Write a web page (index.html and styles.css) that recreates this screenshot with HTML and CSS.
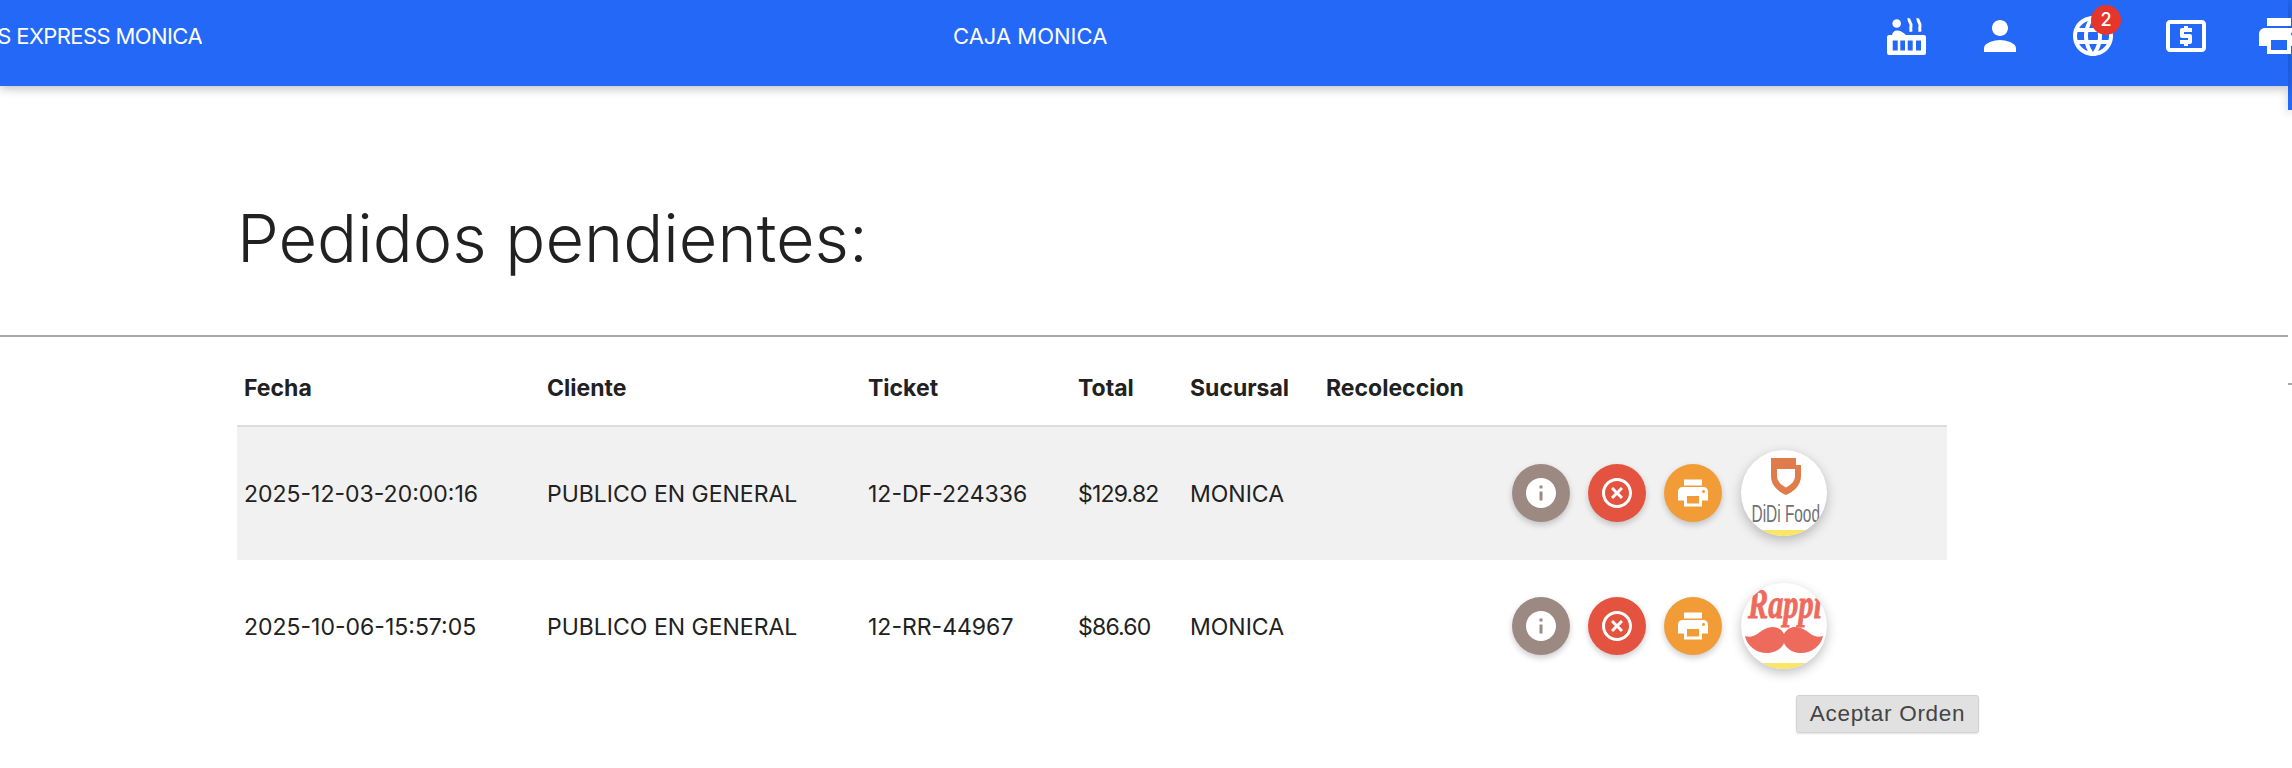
FILE: index.html
```html
<!DOCTYPE html>
<html lang="es">
<head>
<meta charset="utf-8">
<title>Pedidos pendientes</title>
<link rel="stylesheet" href="styles.css">
</head>
<body>
<div class="page">
  <div class="main">
    <header class="topbar">
      <div class="brand"><span class="brand-text">S EXPRESS MONICA</span></div>
      <div class="caja">CAJA MONICA</div>
      <nav class="tools">
        <span class="tool">
          <svg class="ico48" viewBox="0 0 48 48"><circle cx="13.700" cy="11.500" r="4.300" fill="#fff"/><path fill="#fff" fill-rule="evenodd" d="M6 23h3c.5-3 2.500-4.500 5-4.500 3 0 6.500 2 9 4.500h18a2 2 0 0 1 2 2v16a2 2 0 0 1-2 2H6a2 2 0 0 1-2-2V25a2 2 0 0 1 2-2zm3.700 5.500v10h5v-10zm7.600 0v10h4.700v-10zm7.400 0v10h5v-10zm8.300 0v10h5v-10z"/><path fill="none" stroke="#fff" stroke-width="3" d="M26 6.300c-1 3 3 4.700 2 8-.4 1.300-.4 3 0 5.400M35 6.300c-1 3 3 4.700 2 8-.4 1.300-.4 3 0 5.400"/></svg>
        </span>
        <span class="tool">
          <svg class="ico48" viewBox="0 0 24 24"><path d="M12 12c2.210 0 4-1.790 4-4s-1.790-4-4-4-4 1.790-4 4 1.790 4 4 4zm0 2c-2.670 0-8 1.340-8 4v2h16v-2c0-2.660-5.330-4-8-4z"/></svg>
        </span>
        <span class="tool">
          <svg class="ico48" viewBox="0 0 24 24"><path d="M11.990 2C6.470 2 2 6.480 2 12s4.470 10 9.990 10C17.520 22 22 17.520 22 12S17.520 2 11.990 2zm6.930 6h-2.950c-.32-1.250-.78-2.450-1.380-3.560 1.840.63 3.370 1.910 4.330 3.560zM12 4.040c.83 1.200 1.480 2.530 1.910 3.960h-3.820c.43-1.430 1.080-2.760 1.910-3.960zM4.260 14C4.100 13.360 4 12.690 4 12s.1-1.360.26-2h3.380c-.08.66-.14 1.320-.14 2 0 .68.06 1.340.14 2H4.260zm.82 2h2.950c.32 1.250.78 2.450 1.380 3.560-1.840-.63-3.370-1.900-4.330-3.560zm2.950-8H5.080c.96-1.660 2.490-2.930 4.330-3.560C8.810 5.550 8.350 6.750 8.030 8zM12 19.960c-.83-1.200-1.480-2.530-1.910-3.960h3.820c-.43 1.430-1.080 2.760-1.910 3.960zM14.340 14H9.660c-.09-.66-.16-1.320-.16-2 0-.68.07-1.350.16-2h4.680c.09.65.16 1.320.16 2 0 .68-.07 1.340-.16 2zm.25 5.560c.6-1.110 1.060-2.310 1.380-3.560h2.950c-.96 1.650-2.490 2.930-4.330 3.560zM16.360 14c.08-.66.14-1.320.14-2 0-.68-.06-1.340-.14-2h3.380c.16.64.26 1.310.26 2s-.1 1.360-.26 2h-3.380z"/></svg>
          <span class="badge">2</span>
        </span>
        <span class="tool">
          <svg class="ico48" viewBox="0 0 24 24"><path d="M11 17h2v-1h1c.55 0 1-.45 1-1v-3c0-.55-.45-1-1-1h-3v-1h4V8h-2V7h-2v1h-1c-.55 0-1 .45-1 1v3c0 .55.45 1 1 1h3v1H9v2h2v1zm9-13H4c-1.110 0-1.990.89-1.990 2L2 18c0 1.110.89 2 2 2h16c1.110 0 2-.89 2-2V6c0-1.110-.89-2-2-2zm0 14H4V6h16v12z"/></svg>
        </span>
        <span class="tool">
          <svg class="ico48" viewBox="0 0 24 24"><path d="M19 8H5c-1.660 0-3 1.340-3 3v6h4v4h12v-4h4v-6c0-1.660-1.340-3-3-3zm-3 11H8v-5h8v5zm3-7c-.55 0-1-.45-1-1s.45-1 1-1 1 .45 1 1-.45 1-1 1zm-1-9H6v4h12V3z"/></svg>
        </span>
      </nav>
    </header>

    <h1 class="title">Pedidos pendientes:</h1>
    <hr class="rule">

    <div class="wrap">
      <table class="orders">
        <colgroup>
          <col class="c-fecha"><col class="c-cliente"><col class="c-ticket"><col class="c-total"><col class="c-suc"><col class="c-rec"><col class="c-act">
        </colgroup>
        <thead>
          <tr><th>Fecha</th><th>Cliente</th><th>Ticket</th><th>Total</th><th>Sucursal</th><th>Recoleccion</th><th></th></tr>
        </thead>
        <tbody>
          <tr class="shaded">
            <td>2025-12-03-20:00:16</td><td>PUBLICO EN GENERAL</td><td>12-DF-224336</td><td class="money">$129.82</td><td>MONICA</td><td></td>
            <td>
              <div class="actions">
                <span class="btn info"><svg class="ico36" viewBox="0 0 24 24"><path d="M12 2C6.480 2 2 6.480 2 12s4.480 10 10 10 10-4.480 10-10S17.520 2 12 2zm1 15h-2v-6h2v6zm0-8h-2V7h2v2z"/></svg></span>
                <span class="btn cancel"><svg class="ico36" viewBox="0 0 24 24"><path d="M14.590 8L12 10.590 9.410 8 8 9.410 10.590 12 8 14.590 9.410 16 12 13.410 14.590 16 16 14.590 13.410 12 16 9.410 14.590 8zM12 2C6.470 2 2 6.470 2 12s4.470 10 10 10 10-4.470 10-10S17.530 2 12 2zm0 18c-4.410 0-8-3.590-8-8s3.590-8 8-8 8 3.590 8 8-3.590 8-8 8z"/></svg></span>
                <span class="btn printer"><svg class="ico36" viewBox="0 0 24 24"><path d="M19 8H5c-1.660 0-3 1.340-3 3v6h4v4h12v-4h4v-6c0-1.660-1.340-3-3-3zm-3 11H8v-5h8v5zm3-7c-.55 0-1-.45-1-1s.45-1 1-1 1 .45 1 1-.45 1-1 1zm-1-9H6v4h12V3z"/></svg></span>
                <span class="logo">
                  <svg class="logo-svg" viewBox="0 0 86 86">
                    <rect x="0" y="80" width="86" height="6" fill="#fbe566"/>
                    <path fill="#e07c4c" fill-rule="evenodd" d="M30 8h25v7h5v11c0 10-8 16-15 19-7-3-15-9-15-19zm6 11v7c0 5 4 9 9 11.500 5-2.500 9-6.500 9-11.500v-7z"/>
                    <text x="10.500" y="72" class="didi" textLength="68.500" lengthAdjust="spacingAndGlyphs">DiDi Food</text>
                  </svg>
                </span>
              </div>
            </td>
          </tr>
          <tr>
            <td>2025-10-06-15:57:05</td><td>PUBLICO EN GENERAL</td><td>12-RR-44967</td><td class="money">$86.60</td><td>MONICA</td><td></td>
            <td>
              <div class="actions">
                <span class="btn info"><svg class="ico36" viewBox="0 0 24 24"><path d="M12 2C6.480 2 2 6.480 2 12s4.480 10 10 10 10-4.480 10-10S17.520 2 12 2zm1 15h-2v-6h2v6zm0-8h-2V7h2v2z"/></svg></span>
                <span class="btn cancel"><svg class="ico36" viewBox="0 0 24 24"><path d="M14.590 8L12 10.590 9.410 8 8 9.410 10.590 12 8 14.590 9.410 16 12 13.410 14.590 16 16 14.590 13.410 12 16 9.410 14.590 8zM12 2C6.470 2 2 6.470 2 12s4.470 10 10 10 10-4.470 10-10S17.530 2 12 2zm0 18c-4.410 0-8-3.590-8-8s3.590-8 8-8 8 3.590 8 8-3.590 8-8 8z"/></svg></span>
                <span class="btn printer"><svg class="ico36" viewBox="0 0 24 24"><path d="M19 8H5c-1.660 0-3 1.340-3 3v6h4v4h12v-4h4v-6c0-1.660-1.340-3-3-3zm-3 11H8v-5h8v5zm3-7c-.55 0-1-.45-1-1s.45-1 1-1 1 .45 1 1-.45 1-1 1zm-1-9H6v4h12V3z"/></svg></span>
                <span class="logo">
                  <svg class="logo-svg" viewBox="0 0 86 86">
                    <rect x="0" y="80" width="86" height="6" fill="#fbe566"/>
                    <text x="7" y="35" class="rappi" textLength="74" lengthAdjust="spacingAndGlyphs">Rappi</text>
                    <path fill="#ee6a5c" d="M4 53C12 56 17 50 22 47 30 42 39 43 43 51 47 43 56 42 64 47 69 50 74 56 82 53 80 63 70 71 58 70 50 69 45 65 43 60 41 65 36 69 28 70 16 71 6 63 4 53Z"/>
                  </svg>
                </span>
              </div>
            </td>
          </tr>
        </tbody>
      </table>
    </div>
    <div class="tooltip">Aceptar Orden</div>
  </div>
  <aside class="strip">
    <div class="strip-bar"></div>
    <div class="strip-line"></div>
  </aside>
</div>
</body>
</html>
```
FILE: styles.css
```css
* { box-sizing: border-box; }
html, body { margin: 0; padding: 0; background: #fff; }
body { font-family: "Inter", "Liberation Sans", sans-serif; color: #212121; overflow: hidden; }
.page { display: flex; width: 2292px; height: 768px; overflow: hidden; }
.main { position: relative; width: 2288px; flex: none; }

.topbar {
  display: flex; align-items: flex-start; height: 86px; background: #2468f7; color: #fff;
  box-shadow: 0 2px 10px rgba(0,0,0,.28); position: relative;
}
.brand { width: 202px; flex: none; display: flex; justify-content: flex-end; overflow: hidden; white-space: nowrap; font-size: 22px; line-height: 72px; letter-spacing: -.6px; }
.brand-text { flex: none; }
.caja { margin-left: 751px; font-size: 22px; line-height: 72px; white-space: nowrap; }
.tools { display: flex; margin-left: auto; margin-right: -37px; padding-top: 12px; overflow: visible; }
.tool { position: relative; display: flex; justify-content: center; width: 93px; }
.ico48 { width: 48px; height: 48px; fill: #fff; display: block; }
.badge {
  position: absolute; left: 45px; top: -7px; width: 30px; height: 30px; border-radius: 50%;
  background: #e6352b; color: #fff; font-size: 18px; font-weight: 500; line-height: 30px; text-align: center;
}

.title { margin: 0; padding: 112px 0 0 237px; font-size: 66.600px; font-weight: 350; line-height: 80px; color: #212121; }
.rule { margin: 57px 0 0; border: 0; border-top: 2px solid #aaa; }

.wrap { padding: 0 341px 0 237px; }
.orders { width: 100%; table-layout: fixed; border-collapse: collapse; font-size: 23px; }
.c-fecha { width: 303px; } .c-cliente { width: 321px; } .c-ticket { width: 210px; }
.c-total { width: 112px; } .c-suc { width: 136px; } .c-rec { width: 186px; }
.orders th { height: 89px; padding: 14px 7px 0; text-align: left; font-weight: 700; border-bottom: 2px solid #ddd; white-space: nowrap; }
.orders td { height: 134px; padding: 0 7px; white-space: nowrap; font-weight: 400; }
.orders .money { letter-spacing: -.8px; }
.shaded { background: #f1f1f1; }

.actions { display: flex; align-items: center; gap: 18px; padding-bottom: 2px; }
.btn { width: 58px; height: 58px; border-radius: 50%; display: flex; align-items: center; justify-content: center; box-shadow: 0 3px 6px rgba(0,0,0,.2); flex: none; }
.info { background: #9c8a82; }
.cancel { background: #e45240; }
.printer { background: #f29c38; }
.ico36 { width: 36px; height: 36px; fill: #fff; display: block; }
.logo { width: 86px; height: 86px; border-radius: 50%; overflow: hidden; background: #fff; box-shadow: 0 4px 12px rgba(0,0,0,.25); flex: none; margin-left: 1px; }
.logo-svg { display: block; width: 86px; height: 86px; }
.didi { font-family: "Liberation Sans", sans-serif; font-size: 23.500px; fill: #6f6f75; }
.rappi { font-family: "Liberation Serif", serif; font-style: italic; font-weight: 700; font-size: 42px; fill: #ee6a5c; stroke: #ee6a5c; stroke-width: .8px; }

.tooltip {
  position: absolute; left: 1796px; top: 695px; width: 183px; height: 38px;
  background: #e1e1e1; border: 1px solid #d2d2d2; border-radius: 3px; box-shadow: 0 1px 2px rgba(0,0,0,.12);
  font-family: "Liberation Sans", sans-serif; font-size: 22.500px; letter-spacing: .7px; line-height: 36px; text-align: center; color: #444; white-space: nowrap;
}

.strip { width: 4px; flex: none; }
.strip-bar { height: 110px; background: #2468f7; box-shadow: 0 2px 10px rgba(0,0,0,.28); }
.strip-line { margin-top: 273px; height: 2px; background: #aaa; }
```
